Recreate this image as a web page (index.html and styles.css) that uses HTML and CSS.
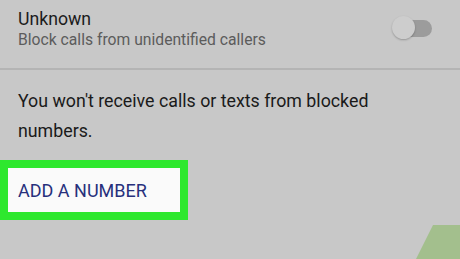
FILE: index.html
```html
<!DOCTYPE html>
<html lang="en">
<head>
    <meta charset="UTF-8">
    <meta name="viewport" content="width=device-width, initial-scale=1.0">
    <title>Blocked numbers</title>
    <link rel="stylesheet" href="styles.css">
</head>
<body>
    <div class="screen">
        <div class="setting">
            <div class="setting-text">
                <div class="setting-title">Unknown</div>
                <div class="setting-sub">Block calls from unidentified callers</div>
            </div>
            <div class="toggle">
                <span class="track"></span>
                <span class="thumb"></span>
            </div>
        </div>
        <div class="info">You won't receive calls or texts from blocked numbers.</div>
        <div class="highlight">
            <button class="add-btn">ADD A NUMBER</button>
        </div>
        <div class="fab"></div>
    </div>
</body>
</html>
```

FILE: styles.css
```css
body {
    margin: 0;
    font-family: Roboto, "Noto Sans", sans-serif;
    background-color: #c8c8c8;
}
.screen {
    position: relative;
    width: 460px;
    height: 259px;
    overflow: hidden;
    background-color: #c8c8c8;
}
.setting {
    display: flex;
    align-items: center;
    justify-content: space-between;
    box-sizing: border-box;
    height: 70px;
    padding: 0 28px 10px 18px;
    border-bottom: 2px solid #b4b4b4;
}
.setting-title {
    font-size: 17.7px;
    color: #1c1c1c;
    line-height: 22px;
}
.setting-sub {
    font-size: 15.7px;
    color: #5c5c5c;
    line-height: 20px;
}
.toggle {
    position: relative;
    width: 40px;
    height: 24px;
    margin-top: -2px;
}
.track {
    position: absolute;
    left: 8px;
    right: 0;
    top: 4px;
    height: 17px;
    border-radius: 9px;
    background-color: #9c9c9c;
}
.thumb {
    position: absolute;
    left: 0;
    top: 0;
    width: 23px;
    height: 23px;
    border-radius: 50%;
    background-color: #cdcdcd;
    box-shadow: 0 1px 2px rgba(0, 0, 0, 0.25);
}
.info {
    padding: 16px 80px 0 18px;
    font-size: 17.8px;
    line-height: 30px;
    color: #1a1a1a;
}
.highlight {
    display: inline-block;
    margin-top: 14px;
    border: 8px solid #2ee82e;
}
.add-btn {
    display: block;
    width: 172px;
    height: 44px;
    padding: 0 0 0 10px;
    border: none;
    background-color: #fafafa;
    color: #27307c;
    font-family: Roboto, "Noto Sans", sans-serif;
    font-size: 18px;
    text-align: left;
}
.fab {
    position: absolute;
    left: 416px;
    top: 225px;
    width: 80px;
    height: 60px;
    background-color: #a3bf8d;
    clip-path: polygon(17px 0, 100% 0, 100% 100%, 0 100%, 0 34px);
}
```
